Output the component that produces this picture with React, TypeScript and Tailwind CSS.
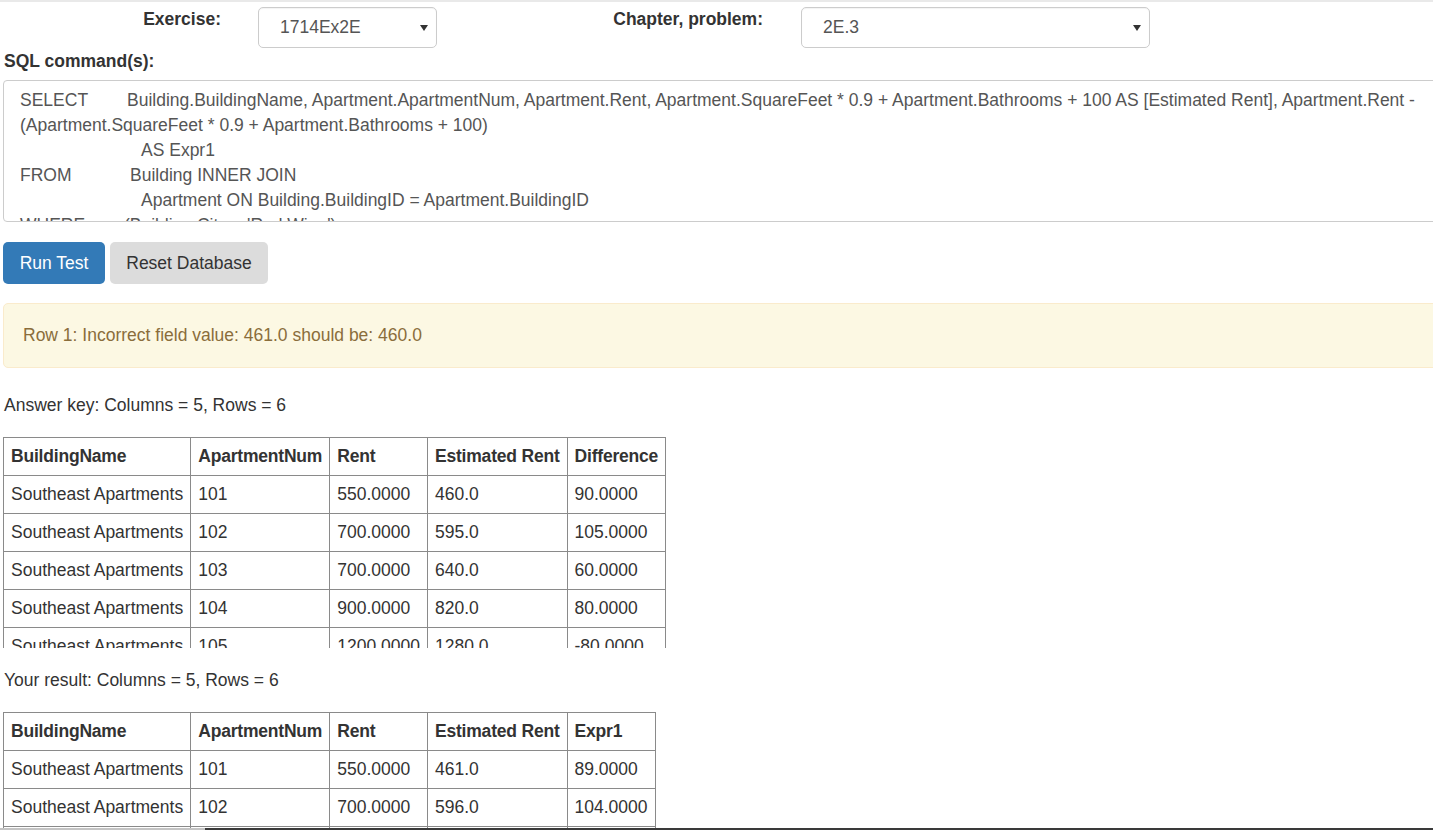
import React from 'react';

const answerRows = [
    ['Southeast Apartments', '101', '550.0000', '460.0', '90.0000'],
    ['Southeast Apartments', '102', '700.0000', '595.0', '105.0000'],
    ['Southeast Apartments', '103', '700.0000', '640.0', '60.0000'],
    ['Southeast Apartments', '104', '900.0000', '820.0', '80.0000'],
    ['Southeast Apartments', '105', '1200.0000', '1280.0', '-80.0000'],
    ['Southeast Apartments', '106', '1200.0000', '1190.0', '10.0000'],
];

const resultRows = [
    ['Southeast Apartments', '101', '550.0000', '461.0', '89.0000'],
    ['Southeast Apartments', '102', '700.0000', '596.0', '104.0000'],
    ['Southeast Apartments', '103', '700.0000', '641.0', '59.0000'],
    ['Southeast Apartments', '104', '900.0000', '821.0', '79.0000'],
    ['Southeast Apartments', '105', '1200.0000', '1281.0', '-81.0000'],
    ['Southeast Apartments', '106', '1200.0000', '1191.0', '9.0000'],
];

// Little dropdown arrow used in the selects
const Caret = () => (
    <svg width="8" height="6" viewBox="0 0 8 6" className="shrink-0">
        <path d="M0 0 L8 0 L4 6 Z" fill="#333" />
    </svg>
);

interface SelectBoxProps {
    value: string;
    width: string;
}

const SelectBox: React.FC<SelectBoxProps> = ({ value, width }) => (
    <div className={`${width} h-[41px] mt-[5px] border border-[#ccc] rounded-[5px] bg-white flex items-center justify-between pl-[21px] pr-[8px] text-[#555] shadow-[inset_0_1px_1px_rgba(0,0,0,0.05)]`}>
        <span>{value}</span>
        <Caret />
    </div>
);

interface ResultTableProps {
    headers: string[];
    rows: string[][];
}

const ResultTable: React.FC<ResultTableProps> = ({ headers, rows }) => (
    <table className="border-collapse border border-[#8a8a8a] whitespace-nowrap">
        <thead>
            <tr>
                {headers.map(h => (
                    <th key={h} className="border border-[#8a8a8a] px-[7px] py-[6px] text-left font-bold tracking-[-0.2px]">{h}</th>
                ))}
            </tr>
        </thead>
        <tbody>
            {rows.map((r, i) => (
                <tr key={i}>
                    {r.map((c, j) => (
                        <td key={j} className="border border-[#8a8a8a] px-[7px] py-[6px]">{c}</td>
                    ))}
                </tr>
            ))}
        </tbody>
    </table>
);

export default function App() {
    return (
        <div className="relative w-[1433px] h-[830px] overflow-hidden bg-white text-[#333] text-[17.5px] leading-[25px] font-['Liberation_Sans',Arial,sans-serif]">
            <div className="h-[2px] bg-[#e9e9e9]" />

            {/* Exercise / chapter pickers */}
            <div className="flex items-start h-[46px]">
                <div className="w-[221px] text-right font-bold pt-[5px]">Exercise:</div>
                <div className="ml-[37px]">
                    <SelectBox value="1714Ex2E" width="w-[179px]" />
                </div>
                <div className="w-[326px] text-right font-bold pt-[5px]">Chapter, problem:</div>
                <div className="ml-[38px]">
                    <SelectBox value="2E.3" width="w-[349px]" />
                </div>
            </div>

            <div className="pl-[4px] font-bold mt-[1px]">SQL command(s):</div>

            {/* SQL text area */}
            <div className="ml-[3px] mt-[6px] w-[1440px] h-[142px] border border-[#ccc] rounded-[4px] overflow-hidden text-[#555] pt-[7px] pl-[16px] whitespace-nowrap">
                <div className="flex">
                    <span className="w-[107px]">SELECT</span>
                    <span>Building.BuildingName, Apartment.ApartmentNum, Apartment.Rent, Apartment.SquareFeet * 0.9 + Apartment.Bathrooms + 100 AS [Estimated Rent], Apartment.Rent -</span>
                </div>
                <div>(Apartment.SquareFeet * 0.9 + Apartment.Bathrooms + 100)</div>
                <div className="pl-[121px]">AS Expr1</div>
                <div className="flex">
                    <span className="w-[110px]">FROM</span>
                    <span>Building INNER JOIN</span>
                </div>
                <div className="pl-[121px]">Apartment ON Building.BuildingID = Apartment.BuildingID</div>
                <div className="flex">
                    <span className="w-[104px]">WHERE</span>
                    <span>(Building.City = 'Red Wing')</span>
                </div>
            </div>

            {/* Buttons */}
            <div className="flex gap-[5px] ml-[3px] mt-[20px]">
                <button className="h-[42px] w-[102px] rounded-[5px] bg-[#337ab7] text-white">Run Test</button>
                <button className="h-[42px] w-[158px] rounded-[5px] bg-[#dcdcdc] text-[#333]">Reset Database</button>
            </div>

            {/* Warning */}
            <div className="ml-[3px] mt-[19px] w-[1440px] h-[65px] bg-[#fcf8e3] border border-[#faebcc] rounded-[5px] text-[#8a6d3b] pl-[19px] flex items-center">
                Row 1: Incorrect field value: 461.0 should be: 460.0
            </div>

            <div className="pl-[4px] mt-[25px]">Answer key: Columns = 5, Rows = 6</div>
            <div className="ml-[3px] mt-[19px] h-[211px] overflow-hidden">
                <ResultTable headers={['BuildingName', 'ApartmentNum', 'Rent', 'Estimated Rent', 'Difference']} rows={answerRows} />
            </div>

            <div className="pl-[4px] mt-[20px]">Your result: Columns = 5, Rows = 6</div>
            <div className="ml-[3px] mt-[19px]">
                <ResultTable headers={['BuildingName', 'ApartmentNum', 'Rent', 'Estimated Rent', 'Expr1']} rows={resultRows} />
            </div>

            {/* window edge at the bottom */}
            <div className="absolute left-0 right-0 bottom-0 h-[2px] flex">
                <div className="w-[205px] bg-[#c4c4c4]" />
                <div className="flex-1 bg-[#3a3a3a]" />
            </div>
        </div>
    );
}
